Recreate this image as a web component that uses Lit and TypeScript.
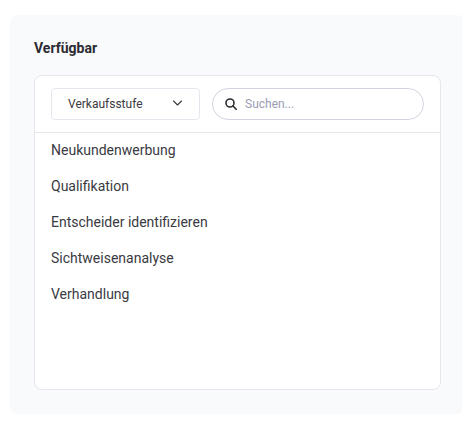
import { LitElement, html, css } from "lit";
import { customElement } from "lit/decorators.js";

const ITEMS = ["Neukundenwerbung", "Qualifikation", "Entscheider identifizieren", "Sichtweisenanalyse", "Verhandlung"];

@customElement("app-root")
export class AppRoot extends LitElement {
  static styles = css`
    :host {
      display: block;
      width: 462px;
      height: 425px;
      overflow: hidden;
      background: #fff;
      font-family: Roboto, "Noto Sans", sans-serif;
      color: #2c2c33;
    }
    .page { padding: 15px 0 0 10px; width: 455px; box-sizing: content-box; }
    .panel {
      width: 455px;
      height: 399px;
      box-sizing: border-box;
      background: #f9fafc;
      border-radius: 8px;
      padding: 24px 24px 24px 24px;
      display: flex;
      flex-direction: column;
    }
    .title {
      font-size: 14px;
      font-weight: 700;
      line-height: 18px;
      height: 18px;
      margin-bottom: 18px;
      color: #2b2b31;
    }
    .card {
      width: 407px;
      height: 315px;
      box-sizing: border-box;
      background: #fff;
      border: 1px solid #e6e7ee;
      border-radius: 8px;
    }
    .toolbar {
      display: flex;
      gap: 12px;
      padding: 12px 16px;
      border-bottom: 1px solid #e6e7ee;
      height: 57px;
      box-sizing: border-box;
    }
    .select {
      width: 149px;
      height: 32px;
      box-sizing: border-box;
      border: 1px solid #e6e7ee;
      border-radius: 4px;
      display: flex;
      align-items: center;
      justify-content: space-between;
      padding: 0 16px;
      font-size: 12px;
      color: #3a3a42;
    }
    .select svg { display: block; }
    .search {
      width: 212px;
      height: 32px;
      box-sizing: border-box;
      border: 1px solid #d3d4e0;
      border-radius: 16px;
      display: flex;
      align-items: center;
      gap: 8px;
      padding: 0 12px;
      font-size: 12px;
      color: #9a9bb3;
    }
    .search svg { display: block; flex: none; }
    .list { display: flex; flex-direction: column; }
    .item {
      height: 36px;
      line-height: 34px;
      padding: 0 16px;
      font-size: 14px;
      color: #3a3a42;
    }
  `;

  render() {
    return html`
      <div class="page">
        <section class="panel">
          <div class="title">Verfügbar</div>
          <div class="card">
            <div class="toolbar">
              <div class="select">
                <span>Verkaufsstufe</span>
                <svg width="12" height="12" viewBox="0 0 12 12" fill="none" stroke="#3a3a42" stroke-width="1.1" stroke-linecap="round" stroke-linejoin="round">
                  <path d="M2.5 3L6.5 7l4-4" />
                </svg>
              </div>
              <div class="search">
                <svg width="12" height="12" viewBox="0 0 12 12" fill="none" stroke="#2b2b31" stroke-width="1.6" stroke-linecap="round">
                  <circle cx="5" cy="5" r="4" />
                  <path d="M8 8l3.2 3.2" />
                </svg>
                <span>Suchen...</span>
              </div>
            </div>
            <div class="list">
              ${ITEMS.map((i) => html`<div class="item">${i}</div>`)}
            </div>
          </div>
        </section>
      </div>
    `;
  }
}
